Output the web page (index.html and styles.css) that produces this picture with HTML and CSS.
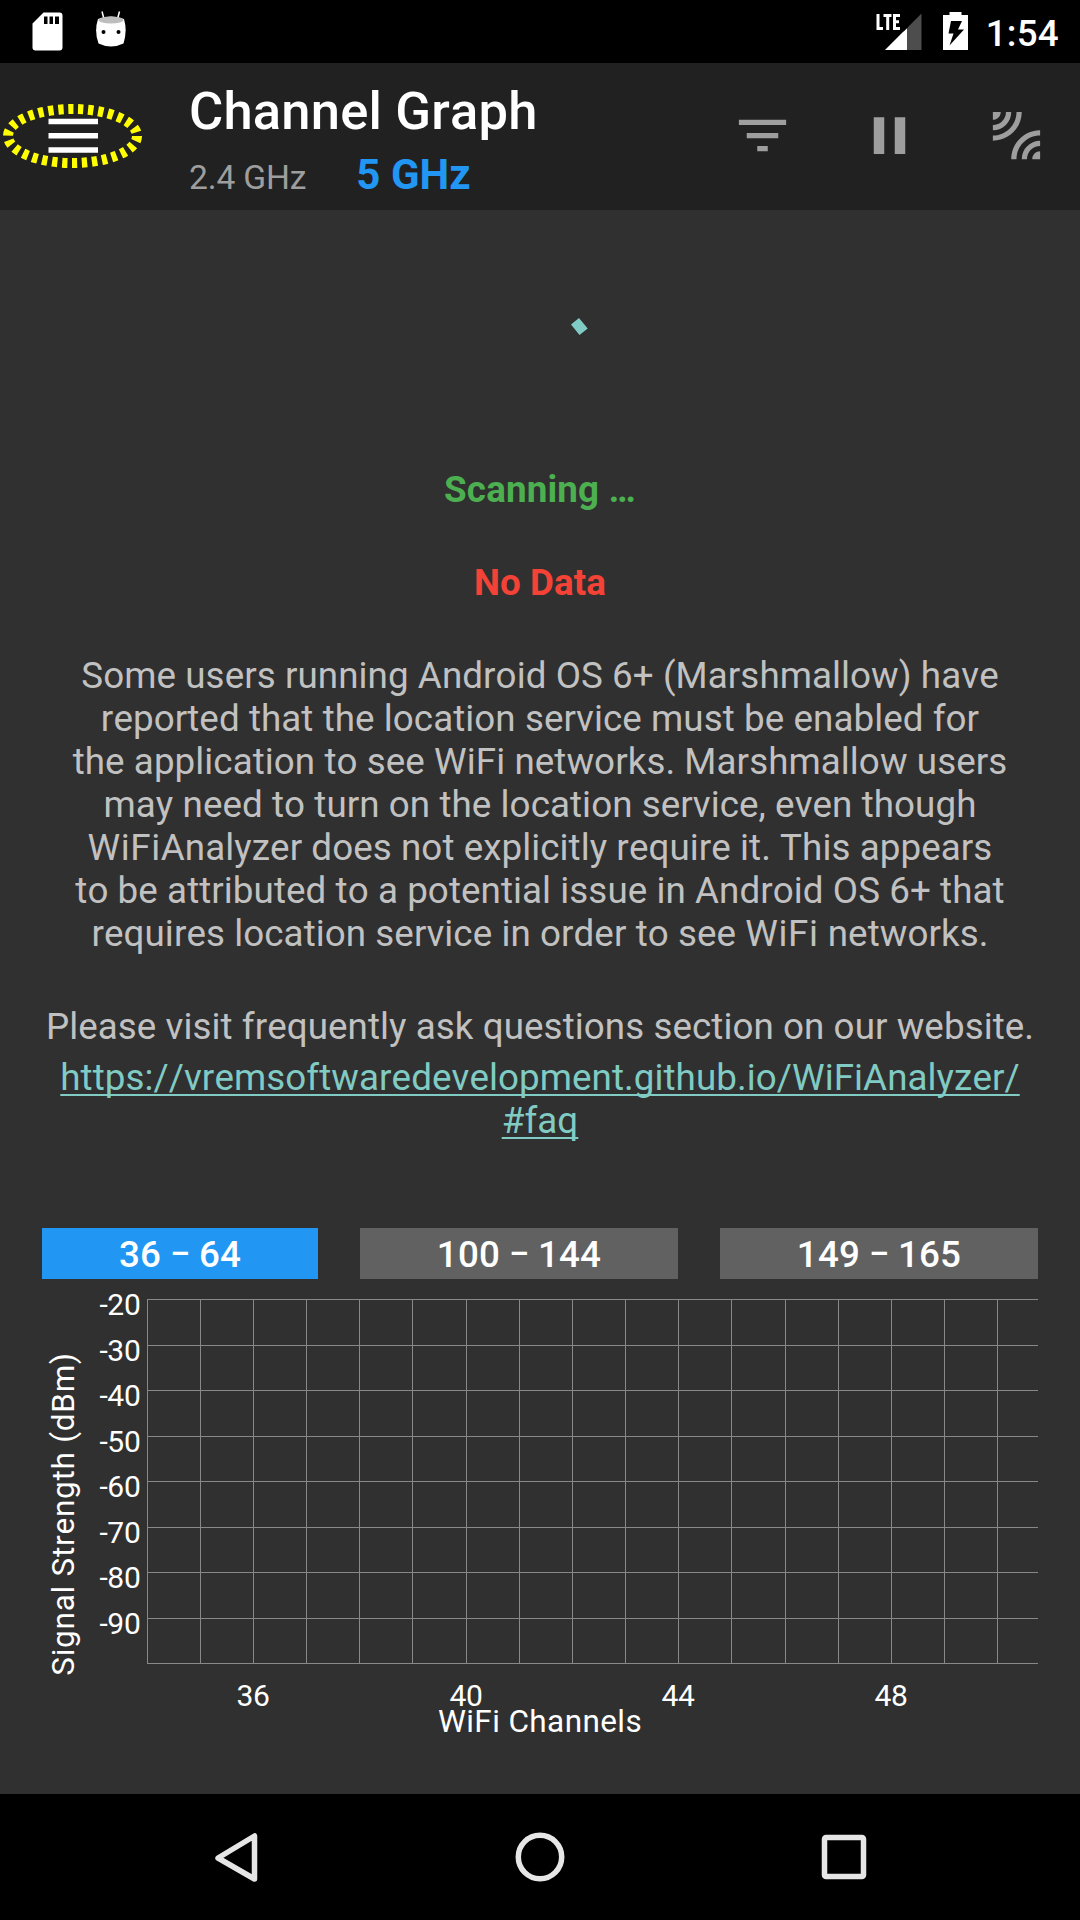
FILE: index.html
```html
<!DOCTYPE html>
<html lang="en">
<head>
<meta charset="utf-8">
<title>Channel Graph</title>
<link rel="stylesheet" href="styles.css">
</head>
<body>
<div class="screen">
  <header class="status-bar">
    <div class="status-left">
      <svg class="icon-sd" width="31" height="39" viewBox="0 0 31 39">
        <path fill="#fff" fill-rule="evenodd" d="M11.500 0.500H27.500Q30.500 0.500 30.500 3.500V35.500Q30.500 38.500 27.500 38.500H3.500Q0.500 38.500 0.500 35.500V11.500ZM12 4.500V12H15.500V4.500ZM17.500 4.500V12H21V4.500ZM23 4.500V12H27V4.500Z"/>
      </svg>
      <svg class="icon-droid" width="32" height="37" viewBox="0 0 32 37">
        <path stroke="#fff" stroke-width="1.500" d="M7 0.500L9 8M24.500 0.500L22.500 8"/>
        <path fill="#fff" d="M3 8Q16 3 29 8Q32.500 20 28.500 32.500Q16 38.500 3.500 32.500Q-1 20 3 8Z"/>
        <ellipse cx="16" cy="9" rx="12.500" ry="3.500" fill="#bdbdbd"/>
        <circle cx="8.500" cy="21" r="2"/><circle cx="23.500" cy="21" r="2"/>
      </svg>
    </div>
    <div class="status-right">
      <svg width="47" height="38" viewBox="0 0 47 38">
        <path fill="#4d4d4d" d="M45.500 0.500V37H9Z"/>
        <path fill="#fff" d="M31 15V37H9Z"/>
        <path fill="none" stroke="#000" stroke-width="3" d="M26.500 17.500L31 13"/>
        <path fill="none" stroke="#fff" stroke-width="3" d="M2 1V16M0.500 15.500H7M7.500 2.500H15.500M11.700 2V17M18.500 1V17M17 2.500H24M17 8.800H23M17 15.500H24"/>
      </svg>
      <svg class="icon-battery" width="25" height="38" viewBox="0 0 25 38">
        <path fill="#fff" d="M6.500 0H18.500V3H25V38H0V3H6.500Z"/>
        <path d="M8 9H19L15 17.500H21L6.500 33.500L10.500 21.500H5.500Z"/>
      </svg>
      <span class="clock">1:54</span>
    </div>
  </header>

  <div class="app-bar">
    <div class="menu">
      <svg width="150" height="147" viewBox="0 0 150 147">
        <path fill="#fff" d="M48.500 55.700h49.500v5.500H48.500zM48.500 70h49.500v5.500H48.500zM48.500 84.300h49.500v5.500H48.500z"/>
        <ellipse cx="72.500" cy="73" rx="64.500" ry="27" fill="none" stroke="#ff0" stroke-width="10" stroke-dasharray="5.300 4.700"/>
      </svg>
    </div>
    <div class="titles">
      <h1 class="title">Channel Graph</h1>
      <div class="bands"><span class="band">2.4 GHz</span><span class="band band-active">5 GHz</span></div>
    </div>
    <div class="actions">
      <svg class="action" viewBox="0 0 24 24"><path d="M10 18h4v-2h-4v2zM3 6v2h18V6H3zm3 7h12v-2H6v2z"/></svg>
      <svg class="action" viewBox="0 0 24 24"><path d="M6 19h4V5H6v14zm8-14v14h4V5h-4z"/></svg>
      <svg class="action" viewBox="0 0 24 24"><path d="M6 3H3v3c1.660 0 3-1.340 3-3zm8 0h-2c0 4.970-4.030 9-9 9v2c6.080 0 11-4.930 11-11zm-4 0H8c0 2.760-2.240 5-5 5v2c3.870 0 7-3.130 7-7zm0 18h2c0-4.970 4.030-9 9-9v-2c-6.070 0-11 4.930-11 11zm8 0h3v-3c-1.660 0-3 1.340-3 3zm-4 0h2c0-2.760 2.240-5 5-5v-2c-3.870 0-7 3.130-7 7z"/></svg>
    </div>
  </div>

  <main class="content">
    <div class="progress">
      <svg width="126" height="126" viewBox="0 0 126 126"><path fill="#80cbc4" d="M94 17.500L102 11L110.700 21.500L102.500 28Z"/></svg>
    </div>
    <p class="message scanning">Scanning …</p>
    <p class="message no-data">No Data</p>
    <p class="message">Some users running Android OS 6+ (Marshmallow) have<br>reported that the location service must be enabled for<br>the application to see WiFi networks. Marshmallow users<br>may need to turn on the location service, even though<br><span class="wifi">WiFi</span>Analyzer does not explicitly require it. This appears<br>to be attributed to a potential issue in Android OS 6+ that<br>requires location service in order to see <span class="wifi">WiFi</span> networks.</p>
    <p class="message visit">Please visit frequently ask questions section on our website.</p>
    <p class="message"><a class="link" href="#faq">https://vremsoftwaredevelopment.github.io/WiFiAnalyzer/<br>#faq</a></p>

    <div class="ranges">
      <button class="range range-active">36 <span class="dash">–</span> 64</button>
      <button class="range">100 <span class="dash">–</span> 144</button>
      <button class="range">149 <span class="dash">–</span> 165</button>
    </div>

    <svg class="chart" width="1080" height="515" viewBox="0 1279 1080 515">
      <path class="grid" d="M147 1299.500H1038M147 1345.500H1038M147 1390.500H1038M147 1436.500H1038M147 1481.500H1038M147 1527.500H1038M147 1572.500H1038M147 1618.500H1038M147 1663.500H1038"/>
      <path class="grid" d="M147.500 1299V1664M200.500 1299V1664M253.500 1299V1664M306.500 1299V1664M359.500 1299V1664M412.500 1299V1664M466.500 1299V1664M519.500 1299V1664M572.500 1299V1664M625.500 1299V1664M678.500 1299V1664M731.500 1299V1664M785.500 1299V1664M838.500 1299V1664M891.500 1299V1664M944.500 1299V1664M997.500 1299V1664"/>
      <g class="label" text-anchor="end">
        <text x="140.500" y="1315">-20</text><text x="140.500" y="1361">-30</text><text x="140.500" y="1406">-40</text><text x="140.500" y="1452">-50</text>
        <text x="140.500" y="1497">-60</text><text x="140.500" y="1543">-70</text><text x="140.500" y="1588">-80</text><text x="140.500" y="1634">-90</text>
      </g>
      <g class="label" text-anchor="middle">
        <text x="253" y="1706">36</text><text x="466" y="1706">40</text><text x="678" y="1706">44</text><text x="891" y="1706">48</text>
      </g>
      <text class="axis" text-anchor="middle" x="540" y="1731.500">WiFi Channels</text>
      <text class="axis axis-vertical" text-anchor="middle" transform="translate(74 1514) rotate(-90)">Signal Strength (dBm)</text>
    </svg>
  </main>

  <nav class="nav-bar">
    <svg class="nav-icon" viewBox="0 0 60 60"><path d="M48.500 8.500V51.500L12 30.500Z" transform="translate(0 .5)"/></svg>
    <svg class="nav-icon" viewBox="0 0 60 60"><circle cx="30" cy="30" r="21.700"/></svg>
    <svg class="nav-icon" viewBox="0 0 60 60"><rect x="10.500" y="10.500" width="39" height="39" rx="1.500"/></svg>
  </nav>
</div>
</body>
</html>
```
FILE: styles.css
```css
* { box-sizing: border-box; }

body {
  margin: 0;
  background: #303030;
  font-family: Roboto, sans-serif;
  font-kerning: none;
  color: #fff;
}

svg { display: block; flex: none; }

.screen {
  display: flex;
  flex-direction: column;
  width: 1080px;
  height: 1920px;
  overflow: hidden;
}

.status-bar {
  display: flex;
  justify-content: space-between;
  height: 63px;
  padding: 12px 21px 0 32px;
  background: #000;
}

.status-left { display: flex; gap: 32px; }
.icon-droid { margin-top: -1px; }

.status-right { display: flex; }
.status-right svg:first-child { margin-top: 1px; }
.icon-battery { margin: 0 18px 0 20px; }

.clock {
  font-size: 36.75px;
  font-weight: 500;
  line-height: 43px;
  letter-spacing: 0.25px;
}

.app-bar {
  display: flex;
  height: 147px;
  background: #212121;
}

.menu { width: 189px; }

.titles { flex: 1; padding-top: 18px; }

.title {
  margin: 0;
  font-size: 52.5px;
  font-weight: 500;
  line-height: 61px;
  letter-spacing: 0.2px;
}

.bands {
  display: flex;
  align-items: baseline;
  gap: 50px;
  line-height: 49px;
  margin-top: 8px;
}

.band { font-size: 33.6px; letter-spacing: -0.15px; color: #9e9e9e; }

.band-active {
  font-size: 42px;
  font-weight: 700;
  letter-spacing: 0;
  color: #2196f3;
}

.actions {
  display: flex;
  align-items: center;
  gap: 64px;
  padding: 0 32px 3px 0;
}

.action { width: 63px; height: 63px; fill: #9e9e9e; }

.content {
  display: flex;
  flex-direction: column;
  height: 1584px;
}

.progress {
  display: flex;
  justify-content: center;
  height: 258px;
  padding-top: 97px;
}

.message {
  margin: 0;
  font-size: 36.75px;
  line-height: 43px;
  letter-spacing: 0.075px;
  text-align: center;
  color: #c1c1c1;
}

.scanning { font-weight: 700; letter-spacing: 0.15px; color: #4caf50; }
.no-data { margin: 50px 0; font-weight: 700; color: #f44336; }
.visit { margin: 50px 0 8px; }
.wifi { letter-spacing: 0.6px; }

.link {
  color: #80cbc4;
  text-decoration: underline;
  text-decoration-thickness: 2px;
  text-decoration-skip-ink: none;
  text-underline-offset: 4px;
}

.ranges {
  display: grid;
  grid-template-columns: 276px 318px 318px;
  gap: 42px;
  margin-top: 86px;
  padding: 0 42px;
}

.range {
  height: 51px;
  padding: 2px 0 0;
  border: 0;
  background: #616161;
  color: #fff;
  font: 500 36.75px/49px Roboto, sans-serif;
  letter-spacing: 0.2px;
}

.range-active { background: #2196f3; }

.dash {
  font-size: 30px;
  font-weight: 700;
  line-height: 1;
  vertical-align: 3px;
}

.grid { stroke: #888; stroke-width: 1; }
.label { font-size: 30px; letter-spacing: -0.3px; fill: #fff; }
.axis { font-size: 31.5px; letter-spacing: 0.4px; fill: #fff; }
.axis-vertical { letter-spacing: 0.75px; }

.nav-bar {
  display: flex;
  justify-content: space-between;
  align-items: center;
  height: 126px;
  padding: 0 206px;
  background: #000;
}

.nav-icon {
  width: 60px;
  height: 60px;
  fill: none;
  stroke: #e6e6e6;
  stroke-width: 5.5;
  stroke-linejoin: round;
}
```
